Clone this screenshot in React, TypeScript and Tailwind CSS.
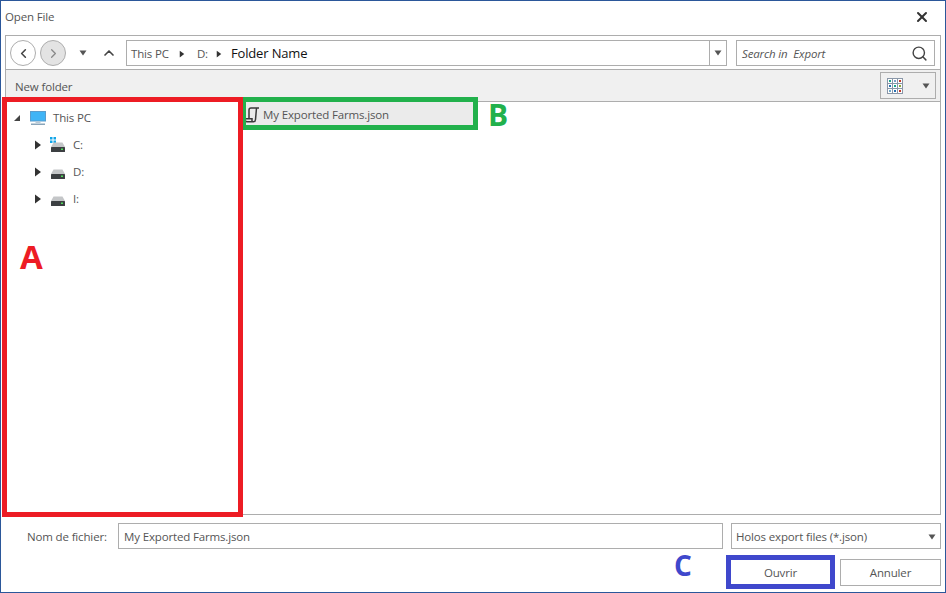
import { ChevronLeft, ChevronRight, ChevronUp, Search, X } from 'lucide-react';

const font = { fontFamily: '"Open Sans", "Noto Sans", sans-serif' };

function Caret({ dir = 'down', className = '' }: { dir?: 'down' | 'right' | 'corner'; className?: string }) {
  if (dir === 'right') {
    return (
      <svg width="8" height="10" viewBox="0 0 8 10" className={className}>
        <path d="M1 0.5 L7 5 L1 9.5 Z" fill="#333" />
      </svg>
    );
  }
  if (dir === 'corner') {
    return (
      <svg width="8" height="8" viewBox="0 0 8 8" className={className}>
        <path d="M7 1 L7 7 L1 7 Z" fill="#444" />
      </svg>
    );
  }
  return (
    <svg width="8" height="6" viewBox="0 0 8 6" className={className}>
      <path d="M0.5 0.5 L7.5 0.5 L4 5.5 Z" fill="#555" />
    </svg>
  );
}

function Monitor() {
  return (
    <svg width="16" height="14" viewBox="0 0 16 14">
      <rect x="0.5" y="0.5" width="15" height="9.5" fill="#3fb4f6" stroke="#5a9ccc" />
      <rect x="5.5" y="10.5" width="5" height="1.5" fill="#b9c9d6" />
      <rect x="1" y="12.5" width="14" height="1.5" fill="#8aa5ba" />
    </svg>
  );
}

function Drive({ windows = false }: { windows?: boolean }) {
  return (
    <svg width="16" height="16" viewBox="0 0 16 16">
      {windows && (
        <g fill="#12a5e8">
          <rect x="0" y="0" width="2.5" height="2.5" />
          <rect x="3.5" y="0" width="2.5" height="2.5" />
          <rect x="0" y="3.5" width="2.5" height="2.5" />
          <rect x="3.5" y="3.5" width="2.5" height="2.5" />
        </g>
      )}
      <path d="M3.5 5.5 L12.5 5.5 L15 10 L1 10 Z" fill="#c4c6c8" />
      <rect x="1" y="10" width="14" height="5" rx="0.5" fill="#3c3f42" />
      <rect x="11" y="11.5" width="2" height="1.5" fill="#4fdc5a" />
    </svg>
  );
}

function JsonFile() {
  return (
    <svg width="16" height="16" viewBox="0 0 16 16" fill="none" stroke="#3a3a3a" strokeWidth="1.5">
      <path d="M5 11 L5 3 Q5 1 7 1 L15 1" />
      <path d="M12.5 1 L11.5 12.5 Q11.3 14.8 9.5 14.8 L3 14.8 Q1 14.8 1 11.8 L8 11.8 L8 14.5" />
    </svg>
  );
}

function GridIcon() {
  const colors = ['#1ca58c', '#7fa0c8', '#c0392b', '#2a6fb0', '#1ca58c', '#8aa63c', '#6fa8c8', '#2a6fb0', '#c0392b'];
  return (
    <div className="grid grid-cols-3 gap-px w-[16px] h-[16px] bg-[#8a97a8] p-px">
      {colors.map((c, i) => (
        <div key={i} className="bg-white flex items-center justify-center">
          <div className="w-[2px] h-[2px]" style={{ backgroundColor: c }} />
        </div>
      ))}
    </div>
  );
}

function TreeRow({ label, windows }: { label: string; windows?: boolean }) {
  return (
    <div className="flex items-center h-[27px] pl-[28px]">
      <Caret dir="right" className="mr-[8px]" />
      <Drive windows={windows} />
      <span className="ml-[7px]">{label}</span>
    </div>
  );
}

export default function App() {
  return (
    <div style={font} className="relative w-[946px] h-[593px] bg-white border border-[#2b579a] flex flex-col text-[11.5px] tracking-[-0.15px] text-[#555] overflow-hidden">
      {/* title bar */}
      <div className="flex items-center justify-between h-[34px] pl-[4px] pr-[15px] shrink-0">
        <span className="leading-none -mt-[2px]">Open File</span>
        <X size={16} strokeWidth={3} className="text-[#333] -mt-[3px]" />
      </div>

      {/* main panel */}
      <div className="flex flex-col mx-[4px] border border-[#adadad] h-[480px] shrink-0">
        <div className="flex items-center h-[33px] pl-[4px] pr-[4px] pt-[1px] shrink-0">
          <div className="w-[26px] h-[26px] rounded-full border border-[#adadad] flex items-center justify-center">
            <ChevronLeft size={15} strokeWidth={2.5} className="text-[#444]" />
          </div>
          <div className="ml-[4px] w-[26px] h-[26px] rounded-full border border-[#adadad] bg-[#e3e3e3] flex items-center justify-center">
            <ChevronRight size={15} strokeWidth={2} className="text-[#888]" />
          </div>
          <Caret className="ml-[13px]" />
          <ChevronUp size={16} strokeWidth={2.5} className="ml-[14px] text-[#444]" />
          <div className="flex items-center ml-[9px] w-[601px] h-[26px] border border-[#adadad]">
            <div className="flex items-center flex-1 pl-[4px] pt-[1px]">
              <span>This PC</span>
              <Caret dir="right" className="ml-[9px] scale-75" />
              <span className="ml-[11px]">D:</span>
              <Caret dir="right" className="ml-[7px] scale-75" />
              <span className="ml-[8px] text-[13px] text-[#111]">Folder Name</span>
            </div>
            <div className="w-[17px] h-full border-l border-[#adadad] flex items-center justify-center">
              <Caret />
            </div>
          </div>
          <div className="flex items-center justify-between ml-[9px] w-[199px] h-[26px] border border-[#adadad] pl-[5px] pr-[6px]">
            <span className="italic pt-[1px]">Search in&nbsp; Export</span>
            <Search size={17} className="text-[#444]" />
          </div>
        </div>

        <div className="flex items-center justify-between h-[33px] bg-[#f0f0f0] border-y border-[#adadad] pl-[9px] pr-[4px] shrink-0">
          <span className="mt-[2px]">New folder</span>
          <div className="flex items-center justify-between w-[56px] h-[27px] border border-[#adadad] pl-[6px] pr-[5px]">
            <GridIcon />
            <Caret />
          </div>
        </div>

        <div className="flex flex-1">
          <div className="w-[236px] shrink-0 pt-[2px]">
            <div className="flex items-center h-[27px] pl-[7px]">
              <Caret dir="corner" className="mr-[9px]" />
              <Monitor />
              <span className="ml-[7px]">This PC</span>
            </div>
            <TreeRow label="C:" windows />
            <TreeRow label="D:" />
            <TreeRow label="I:" />
          </div>
          <div className="flex-1">
            <div className="flex items-center w-[235px] h-[25px] bg-[#ebebeb] pl-[2px]">
              <JsonFile />
              <span className="ml-[3px]">My Exported Farms.json</span>
            </div>
          </div>
        </div>
      </div>

      {/* footer */}
      <div className="flex items-center mt-[8px] h-[26px] pl-[26px] pr-[4px] shrink-0">
        <span className="w-[91px] pt-[1px]">Nom de fichier:</span>
        <div className="flex items-center w-[605px] h-[26px] border border-[#adadad] pl-[5px] pt-[1px]">My Exported Farms.json</div>
        <div className="flex items-center justify-between ml-[8px] w-[210px] h-[26px] border border-[#adadad] pl-[4px] pr-[4px] pt-[1px]">
          <span>Holos export files (*.json)</span>
          <Caret />
        </div>
      </div>
      <div className="flex justify-end gap-[10px] mt-[10px] pr-[4px] shrink-0">
        <div className="flex items-center justify-center w-[99px] h-[27px]">Ouvrir</div>
        <div className="flex items-center justify-center w-[101px] h-[27px] border border-[#adadad]">Annuler</div>
      </div>

      {/* annotation overlays */}
      <div className="absolute left-[240px] top-[96px] w-[237px] h-[33px] border-[5px] border-[#22b14c]" />
      <div className="absolute left-[1px] top-[96px] w-[241px] h-[420px] border-[5px] border-[#ed1c24]" />
      <div className="absolute left-[725px] top-[554px] w-[109px] h-[34px] border-[5px] border-[#3f48cc]" />
      <span className="absolute left-[19px] top-[239px] text-[33px] leading-none font-bold tracking-normal text-[#ed1c24]">A</span>
      <span className="absolute left-[487px] top-[99px] text-[30px] leading-none font-bold tracking-normal text-[#22b14c]">B</span>
      <span className="absolute left-[673px] top-[550px] text-[28px] leading-none font-bold tracking-normal text-[#3f48cc]">C</span>
    </div>
  );
}
